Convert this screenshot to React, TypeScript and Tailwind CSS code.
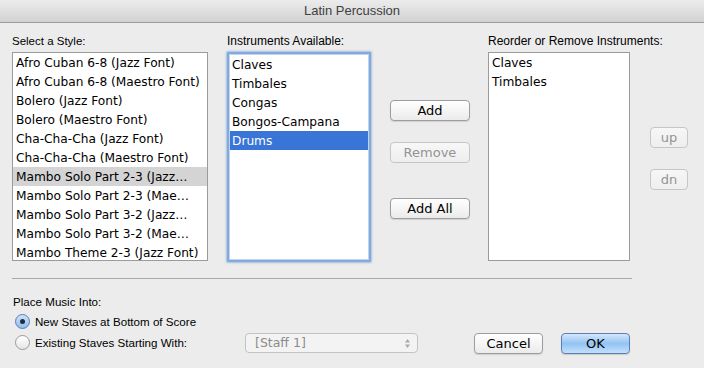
const STYLES = [
  "Afro Cuban 6-8 (Jazz Font)",
  "Afro Cuban 6-8 (Maestro Font)",
  "Bolero (Jazz Font)",
  "Bolero (Maestro Font)",
  "Cha-Cha-Cha (Jazz Font)",
  "Cha-Cha-Cha (Maestro Font)",
  "Mambo Solo Part 2-3 (Jazz…",
  "Mambo Solo Part 2-3 (Mae…",
  "Mambo Solo Part 3-2 (Jazz…",
  "Mambo Solo Part 3-2 (Mae…",
  "Mambo Theme 2-3 (Jazz Font)",
];

const AVAILABLE = ["Claves", "Timbales", "Congas", "Bongos-Campana", "Drums"];
const CHOSEN = ["Claves", "Timbales"];

const sans = { fontFamily: '"Liberation Sans", Arial, sans-serif' };
const listFont = { fontFamily: '"DejaVu Sans", Verdana, sans-serif' };

function Button({
  label,
  width,
  disabled = false,
  primary = false,
}: {
  label: string;
  width: string;
  disabled?: boolean;
  primary?: boolean;
}) {
  let cls =
    "flex h-[21px] items-center justify-center rounded-[4px] border text-[13px] leading-none ";
  if (primary) {
    cls +=
      "border-[#5b7fb6] bg-gradient-to-b from-[#d5e7fb] via-[#92c3f3] to-[#c4e0fb] text-black shadow-[0_1px_1px_rgba(0,0,0,0.15)]";
  } else if (disabled) {
    cls += "border-[#c6c6c6] bg-gradient-to-b from-[#f7f7f7] to-[#eeeeee] text-[#939393]";
  } else {
    cls +=
      "border-[#9d9d9d] bg-gradient-to-b from-white to-[#ebebeb] text-black shadow-[0_1px_1px_rgba(0,0,0,0.12)]";
  }
  return (
    <div className={`${cls} ${width}`} style={listFont}>
      {label}
    </div>
  );
}

function Radio({ checked, label }: { checked: boolean; label: string }) {
  return (
    <div className="flex items-center">
      <span
        className={`flex h-[15px] w-[15px] items-center justify-center rounded-full border ${
          checked
            ? "border-[#5a7db3] bg-gradient-to-b from-[#cfe2f8] to-[#8fbdf0]"
            : "border-[#9a9a9a] bg-gradient-to-b from-white to-[#e6e6e6]"
        }`}
      >
        {checked && <span className="h-[5px] w-[5px] rounded-full bg-[#1d2d44]" />}
      </span>
      <span className="ml-[5px] text-[11.6px]">{label}</span>
    </div>
  );
}

export default function App() {
  return (
    <div
      className="h-[368px] w-[704px] overflow-hidden bg-[#ececec] text-black"
      style={sans}
    >
      {/* Title bar */}
      <div className="flex h-[23px] items-center justify-center border-b border-[#9c9c9c] bg-gradient-to-b from-[#ececec] to-[#d2d2d2] text-[13px] text-[#404040]">
        Latin Percussion
      </div>

      <div className="flex pl-[12px] pt-[10px]">
        {/* Styles */}
        <div className="w-[196px]">
          <p className="mb-[3px] h-[16px] whitespace-nowrap text-[11.5px] leading-[16px]">
            Select a Style:
          </p>
          <div
            className="h-[209px] overflow-hidden border border-[#9b9b9b] bg-white"
            style={listFont}
          >
            {STYLES.map((s, i) => (
              <div
                key={s}
                className={`h-[19px] whitespace-nowrap pl-[3px] pt-[1px] text-[12.2px] leading-[18px] ${
                  i === 6 ? "bg-[#d4d4d4]" : ""
                }`}
              >
                {s}
              </div>
            ))}
          </div>
        </div>

        {/* Available */}
        <div className="ml-[19px] w-[144px]">
          <p className="mb-[3px] h-[16px] whitespace-nowrap text-[12px] leading-[16px]">
            Instruments Available:
          </p>
          <div
            className="h-[210px] rounded-[1px] border-2 border-[#84a9dc] bg-white shadow-[0_0_2px_1px_rgba(120,160,220,0.6)]"
            style={listFont}
          >
            <div className="h-full border border-[#c0d3ee]">
              {AVAILABLE.map((s, i) => (
                <div
                  key={s}
                  className={`h-[19px] pl-[2px] pt-[1px] text-[12.2px] leading-[18px] ${
                    i === 4 ? "bg-[#3875d7] text-white" : ""
                  }`}
                >
                  {s}
                </div>
              ))}
            </div>
          </div>
        </div>

        {/* Add / remove */}
        <div className="ml-[19px] flex w-[80px] flex-col pt-[67px]">
          <Button label="Add" width="w-[80px]" />
          <div className="h-[21px]" />
          <Button label="Remove" width="w-[80px]" disabled />
          <div className="h-[35px]" />
          <Button label="Add All" width="w-[80px]" />
        </div>

        {/* Chosen */}
        <div className="ml-[18px] w-[142px]">
          <p className="mb-[3px] h-[16px] whitespace-nowrap text-[12px] leading-[16px]">
            Reorder or Remove Instruments:
          </p>
          <div
            className="h-[209px] border border-[#9b9b9b] bg-white"
            style={listFont}
          >
            {CHOSEN.map((s) => (
              <div key={s} className="h-[19px] pl-[3px] pt-[1px] text-[12.2px] leading-[18px]">
                {s}
              </div>
            ))}
          </div>
        </div>

        {/* up / dn */}
        <div className="ml-[20px] flex w-[38px] flex-col pt-[94px]">
          <Button label="up" width="w-[38px]" disabled />
          <div className="h-[21px]" />
          <Button label="dn" width="w-[38px]" disabled />
        </div>
      </div>

      <div className="ml-[12px] mt-[16px] w-[620px] border-t border-[#a9a9a9]" />

      {/* Place music into */}
      <div className="pl-[13px] pt-[15px]">
        <p className="h-[16px] text-[11.6px] leading-[16px]">Place Music Into:</p>
        <div className="mt-[2px] flex h-[20px] items-center pl-[2px]">
          <Radio checked label="New Staves at Bottom of Score" />
        </div>
        <div className="flex h-[22px] items-center pl-[2px]">
          <div className="w-[230px]">
            <Radio checked={false} label="Existing Staves Starting With:" />
          </div>
          <div
            className="flex h-[20px] w-[173px] items-center justify-between rounded-[4px] border border-[#c3c3c3] bg-[#f3f3f3] pl-[9px] pr-[6px] text-[12.5px] text-[#8c8c8c]"
            style={listFont}
          >
            <span>[Staff 1]</span>
            <svg width="7" height="11" viewBox="0 0 7 11">
              <path d="M3.5 1 L6 4.5 H1 Z" fill="#a8a8a8" />
              <path d="M3.5 10 L6 6.5 H1 Z" fill="#a8a8a8" />
            </svg>
          </div>
          <div className="ml-[56px]">
            <Button label="Cancel" width="w-[69px]" />
          </div>
          <div className="ml-[18px]">
            <Button label="OK" width="w-[69px]" primary />
          </div>
        </div>
      </div>
    </div>
  );
}
